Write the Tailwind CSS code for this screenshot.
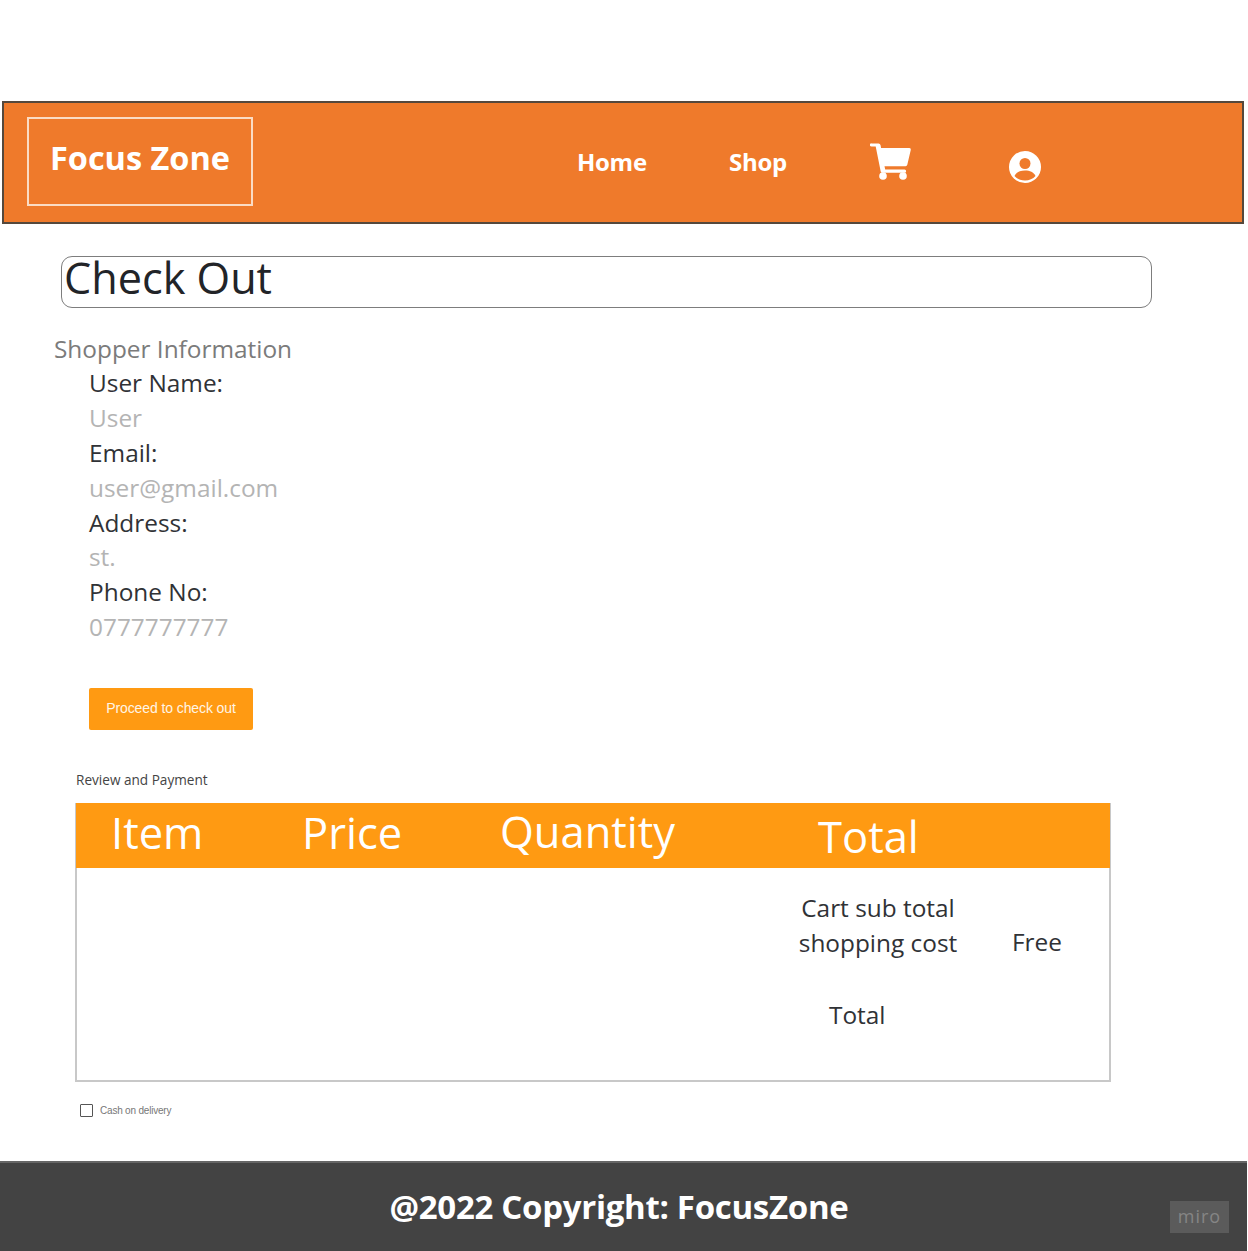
<!DOCTYPE html>
<html>
<head>
<meta charset="utf-8">
<script src="https://cdn.jsdelivr.net/npm/@tailwindcss/browser@4"></script>
</head>
<body class="bg-white font-['Open_Sans',sans-serif] text-[#303236]">
<div class="relative h-[1251px] w-[1248px] overflow-hidden">
  <header class="mt-[101px] ml-[2px] flex h-[123px] w-[1242px] border-2 border-[#55483c] bg-[#ef7a2b] text-white">
    <div class="mt-[14px] ml-[23px] flex h-[89px] w-[226px] justify-center border-2 border-[#fbdcc4] pt-[17px] text-[32.500px] leading-[44px] font-bold">Focus Zone</div>
    <nav class="relative grow">
      <a class="absolute top-[42px] left-[324px] text-[24px] leading-[33px] font-bold tracking-[-0.3px]">Home</a>
      <a class="absolute top-[42px] left-[476px] text-[24px] leading-[33px] font-bold tracking-[-0.3px]">Shop</a>
      <svg class="absolute top-[40px] left-[617px]" width="41" height="37" viewBox="0 0 41 37" fill="white"><path d="M1.500 0.500h7a2 2 0 0 1 2 1.600l.6 3h27.800a1.800 1.800 0 0 1 1.800 2.200l-3.400 14.500a1.800 1.800 0 0 1-1.800 1.400h-21l.7 3.300h19.300a1.600 1.600 0 0 1 0 3.300h-22a1.800 1.800 0 0 1-1.800-1.400l-5-24.800h-4.200a1.650 1.650 0 0 1 0-3.300z"/><circle cx="13" cy="33" r="3.800"/><circle cx="33" cy="33" r="3.800"/></svg>
      <svg class="absolute top-[48px] left-[756px]" width="32" height="32" viewBox="0 0 32 32"><circle cx="16" cy="16" r="16" fill="white"/><circle cx="16" cy="12.500" r="5.500" fill="#ef7a2b"/><path d="M5.500 25c2-4 5.500-5.500 10.500-5.500s8.500 1.500 10.500 5.500c-2.500 2.800-6.300 4.500-10.500 4.500s-8-1.700-10.500-4.500z" fill="#ef7a2b"/></svg>
    </nav>
  </header>

  <h1 class="mt-[32px] ml-[61px] h-[52px] w-[1091px] rounded-[11px] border border-[#7d7d7d] pl-[2px] text-[43.200px] leading-[42px] font-normal text-[#222428]">Check Out</h1>

  <section class="mt-[24px] text-[24.400px] leading-[34.900px]">
    <p class="ml-[54px] text-[#7b7b7b]">Shopper Information</p>
    <div class="-mt-[1px] ml-[89px]">
      <p>User Name:</p>
      <p class="text-[#b4b4b4]">User</p>
      <p>Email:</p>
      <p class="text-[#b4b4b4]">user@gmail.com</p>
      <p>Address:</p>
      <p class="text-[#b4b4b4]">st.</p>
      <p>Phone No:</p>
      <p class="text-[#b4b4b4]">0777777777</p>
    </div>
  </section>

  <button class="mt-[43px] ml-[89px] block h-[42px] w-[164px] rounded-[2px] bg-[#ff9a12] pb-[2px] font-['Liberation_Sans',sans-serif] text-[14px] tracking-[-0.1px] text-[#fff5e6]">Proceed to check out</button>

  <p class="mt-[40px] ml-[76px] text-[13.600px] leading-[19px] text-[#444]">Review and Payment</p>

  <section class="mt-[14px] ml-[75px] h-[279px] w-[1036px] border-2 border-t-0 border-[#c8c8c8]">
    <div class="relative -mx-[1px] h-[65px] bg-[#ff9a12] text-[43.500px] leading-[60px] text-white">
      <span class="absolute top-0 left-[35px]">Item</span>
      <span class="absolute top-0 left-[226px]">Price</span>
      <span class="absolute -top-[1px] left-[424px]">Quantity</span>
      <span class="absolute top-[4px] left-[742px]">Total</span>
    </div>
    <div class="relative text-[24.400px] leading-[34.900px]">
      <div class="absolute top-[23px] left-[700px] w-[202px] text-center">Cart sub total<br>shopping cost</div>
      <span class="absolute top-[57px] left-[935px]">Free</span>
      <span class="absolute top-[130px] left-[752px]">Total</span>
    </div>
  </section>

  <label class="mt-[21px] ml-[80px] flex h-[14px] items-center gap-[7px] font-['Liberation_Sans',sans-serif] text-[10px] tracking-[-0.2px] text-[#777]">
    <span class="h-[13px] w-[13px] rounded-[1px] border border-[#555]"></span>
    <span>Cash on delivery</span>
  </label>

  <footer class="relative mt-[44px] h-[90px] w-[1247px] border-t-2 border-[#666] bg-[#434343] pt-[21px] pr-[9px] text-center text-[33px] leading-[45px] font-bold tracking-[-0.3px] text-white">@2022 Copyright: FocusZone</footer>
  <div class="absolute top-[1201px] left-[1170px] flex h-[32px] w-[59px] items-center justify-center bg-[#5b5b5b] pb-[2px] text-[18px] tracking-[1px] text-[#858585]">miro</div>
</div>
</body>
</html>
